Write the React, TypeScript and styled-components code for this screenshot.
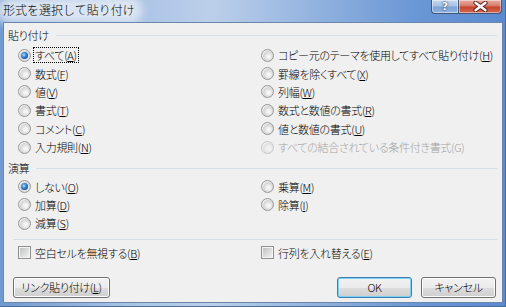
import React from "react";
import styled, { createGlobalStyle, css } from "styled-components";

const GlobalStyle = createGlobalStyle`
  html, body {
    margin: 0;
    padding: 0;
    background: #fff;
  }
`;

const uiFont = `"Noto Sans CJK JP", "Noto Sans", sans-serif`;

type Opt = { text: string; k?: string; tail?: string; checked?: boolean; focused?: boolean; disabled?: boolean };

const pasteOptions: Opt[] = [
  { text: "すべて", k: "A", checked: true, focused: true },
  { text: "数式", k: "F" },
  { text: "値", k: "V" },
  { text: "書式", k: "T" },
  { text: "コメント", k: "C" },
  { text: "入力規則", k: "N" },
  { text: "コピー元のテーマを使用してすべて貼り付け", k: "H" },
  { text: "罫線を除くすべて", k: "X" },
  { text: "列幅", k: "W" },
  { text: "数式と数値の書式", k: "R" },
  { text: "値と数値の書式", k: "U" },
  { text: "すべての結合されている条件付き書式", tail: "(G)", disabled: true },
];

const operationOptions: Opt[] = [
  { text: "しない", k: "O", checked: true },
  { text: "加算", k: "D" },
  { text: "減算", k: "S" },
  { text: "乗算", k: "M" },
  { text: "除算", k: "I" },
];

export default function App() {
  return (
    <>
      <GlobalStyle />
      <Window>
        <TitleBar>
          <Title>形式を選択して貼り付け</Title>
          <CaptionButtons>
            <HelpButton>?</HelpButton>
            <CloseButton>
              <svg width="17" height="11" viewBox="0 0 17 11">
                <path
                  d="M3.5 1.8 L13.5 9.2 M13.5 1.8 L3.5 9.2"
                  stroke="#5a2018"
                  strokeWidth="4.2"
                  strokeLinecap="round"
                />
                <path
                  d="M3.5 1.8 L13.5 9.2 M13.5 1.8 L3.5 9.2"
                  stroke="#fff"
                  strokeWidth="2.4"
                  strokeLinecap="round"
                />
              </svg>
            </CloseButton>
          </CaptionButtons>
        </TitleBar>
        <Client>
          <GroupHeader>
            <span>貼り付け</span>
            <GroupLine />
          </GroupHeader>
          <OptionGrid $rows={6} $top={4}>
            {pasteOptions.map((o) => (
              <RadioOption key={o.text} {...o} />
            ))}
          </OptionGrid>
          <GroupHeader $top={5}>
            <span>演算</span>
            <GroupLine />
          </GroupHeader>
          <OptionGrid $rows={3} $top={2}>
            {operationOptions.map((o) => (
              <RadioOption key={o.text} {...o} />
            ))}
          </OptionGrid>
          <Separator />
          <CheckRow>
            <Option>
              <CheckBox />
              <OptionText>
                空白セルを無視する(<u>B</u>)
              </OptionText>
            </Option>
            <Option>
              <CheckBox />
              <OptionText>
                行列を入れ替える(<u>E</u>)
              </OptionText>
            </Option>
          </CheckRow>
          <ButtonRow>
            <PushButton $width={97}>
              リンク貼り付け(<u>L</u>)
            </PushButton>
            <Spacer />
            <PushButton $width={75} $default>
              OK
            </PushButton>
            <PushButton $width={75}>キャンセル</PushButton>
          </ButtonRow>
        </Client>
      </Window>
    </>
  );
}

function RadioOption({ text, k, tail, checked, focused, disabled }: Opt) {
  return (
    <Option $disabled={disabled}>
      <Radio $checked={checked} $disabled={disabled} />
      <OptionText $focused={focused}>
        {text}
        {k ? (
          <>
            (<u>{k}</u>)
          </>
        ) : (
          tail
        )}
      </OptionText>
    </Option>
  );
}

const Window = styled.div`
  width: 506px;
  height: 307px;
  box-sizing: border-box;
  display: flex;
  flex-direction: column;
  padding: 0 2px 3px 3px;
  border-right: 1px solid #4d6d96;
  border-bottom: 1px solid #4d6d96;
  background: linear-gradient(
    90deg,
    #7099d2 0%,
    #a9c2e5 25%,
    #bccfea 42%,
    #93b3df 62%,
    #6a97d5 82%,
    #5a8ad1 100%
  );
  font-family: ${uiFont};
  font-size: 11px;
  font-weight: 300;
  letter-spacing: -0.3px;
  font-feature-settings: "palt";
  color: #000;
  overflow: hidden;
`;

const TitleBar = styled.div`
  height: 22px;
  display: flex;
  align-items: flex-start;
  justify-content: space-between;
  flex: none;
`;

const Title = styled.div`
  margin-top: 3px;
  font-size: 12px;
  letter-spacing: 0;
  font-feature-settings: normal;
  line-height: 14px;
  color: #000;
  background: rgba(226, 234, 244, 0.9);
  box-shadow: 0 0 10px 7px rgba(226, 234, 244, 0.9);
  border-radius: 6px;
  white-space: nowrap;
`;

const CaptionButtons = styled.div`
  display: flex;
  margin-right: 1px;
`;

const captionBase = css`
  height: 14px;
  box-sizing: border-box;
  border: 1px solid #3e5878;
  border-top: none;
  display: flex;
  align-items: center;
  justify-content: center;
  box-shadow: inset 0 0 0 1px rgba(255, 255, 255, 0.45);
`;

const HelpButton = styled.div`
  ${captionBase};
  width: 27px;
  border-right: none;
  border-bottom-left-radius: 4px;
  background: linear-gradient(#c5d7ee 0%, #a9c2e4 45%, #7ea3d6 55%, #8fb3e2 100%);
  color: #fff;
  font-family: "DejaVu Sans", sans-serif;
  font-weight: bold;
  font-size: 11px;
  line-height: 12px;
  letter-spacing: 0;
  text-shadow: 0 0 2px #233a5c, 0 0 1px #233a5c;
`;

const CloseButton = styled.div`
  ${captionBase};
  width: 44px;
  border-bottom-right-radius: 4px;
  background: linear-gradient(#e8aaa0 0%, #d98575 40%, #c8442f 55%, #d56a52 100%);
`;

const Client = styled.div`
  flex: 1;
  display: flex;
  flex-direction: column;
  background: #f0f0f0;
  border: 1px solid #6a86ab;
  padding: 0 5px 0 4px;
`;

const GroupHeader = styled.div<{ $top?: number }>`
  display: flex;
  align-items: center;
  gap: 7px;
  height: 14px;
  line-height: 14px;
  margin-top: ${(p) => p.$top ?? 5}px;
  white-space: nowrap;
`;

const GroupLine = styled.div`
  flex: 1;
  height: 1px;
  background: #d5dfe5;
`;

const OptionGrid = styled.div<{ $rows: number; $top: number }>`
  display: grid;
  grid-template-columns: 243px 1fr;
  grid-template-rows: repeat(${(p) => p.$rows}, 18.4px);
  grid-auto-flow: column;
  padding-left: 10px;
  margin-top: ${(p) => p.$top}px;
`;

const Option = styled.label<{ $disabled?: boolean }>`
  display: flex;
  align-items: center;
  gap: 3px;
  height: 18.4px;
  white-space: nowrap;
  color: ${(p) => (p.$disabled ? "#a3a3a3" : "#000")};

  u {
    text-underline-offset: 1px;
  }
`;

const OptionText = styled.span<{ $focused?: boolean }>`
  line-height: 14px;
  padding: 0 1px;
  outline: ${(p) => (p.$focused ? "1px dotted #000" : "none")};
`;

const Radio = styled.span<{ $checked?: boolean; $disabled?: boolean }>`
  flex: none;
  width: 13px;
  height: 13px;
  box-sizing: border-box;
  border-radius: 50%;
  border: 1px solid #979797;
  background: radial-gradient(circle at 60% 60%, #fbfbfb 0, #f0f0f0 2px, #d4d4d4 5px, #ececec 6px);
  display: inline-flex;
  align-items: center;
  justify-content: center;
  opacity: ${(p) => (p.$disabled ? 0.45 : 1)};

  ${(p) =>
    p.$checked &&
    css`
      &::after {
        content: "";
        width: 7px;
        height: 7px;
        border-radius: 50%;
        background: radial-gradient(circle at 40% 40%, #b8e3ff 0, #3f8fe0 35%, #0d4a9c 75%, #0a3a7a 100%);
      }
    `}
`;

const CheckBox = styled.span`
  flex: none;
  width: 13px;
  height: 13px;
  box-sizing: border-box;
  border: 1px solid #8e8f8f;
  background: linear-gradient(135deg, #b9bcc0 0%, #dadada 50%, #f4f4f4 100%);
  box-shadow: inset 0 0 0 1px #f4f4f4;
`;

const Separator = styled.div`
  height: 1px;
  background: #d5dfe5;
  margin: 6px 0 0 5px;
`;

const CheckRow = styled.div`
  display: grid;
  grid-template-columns: 243px 1fr;
  padding-left: 10px;
  margin-top: 4px;
`;

const ButtonRow = styled.div`
  display: flex;
  gap: 9px;
  margin: 15px 1px 0 5px;
`;

const Spacer = styled.div`
  flex: 1;
`;

const PushButton = styled.button<{ $width: number; $default?: boolean }>`
  width: ${(p) => p.$width}px;
  height: 21px;
  box-sizing: border-box;
  padding: 0;
  font-family: ${uiFont};
  font-size: 11px;
  font-weight: 300;
  letter-spacing: -0.3px;
  font-feature-settings: "palt";
  color: #000;
  border-radius: 3px;
  border: 1px solid ${(p) => (p.$default ? "#3c7fb1" : "#707070")};
  background: linear-gradient(#f2f2f2 0%, #ebebeb 50%, #dddddd 51%, #cfcfcf 100%);
  box-shadow: inset 0 0 0 1px ${(p) => (p.$default ? "#7bd0f5" : "#fcfcfc")};
  white-space: nowrap;

  u {
    text-underline-offset: 1px;
  }
`;
